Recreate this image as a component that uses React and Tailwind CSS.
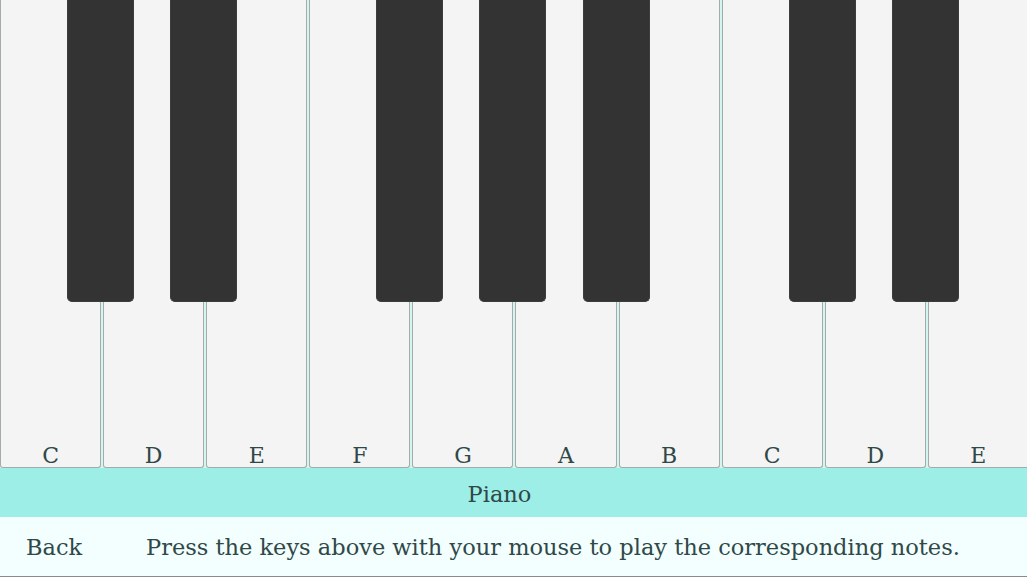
import React from 'react';

const keys = [
    { note: 'C', sharp: true },
    { note: 'D', sharp: true },
    { note: 'E', sharp: false },
    { note: 'F', sharp: true },
    { note: 'G', sharp: true },
    { note: 'A', sharp: true },
    { note: 'B', sharp: false },
    { note: 'C', sharp: true },
    { note: 'D', sharp: true },
    { note: 'E', sharp: false },
];

const App = () => {
    return (
        <div className="h-screen flex flex-col bg-[#effffd] text-[#2f4848] overflow-hidden" style={{ fontFamily: '"DejaVu Serif", serif' }}>
            {/* keyboard */}
            <div className="h-[468px] flex gap-[2px] w-[1029px] bg-[#d4f4f0]">
                {keys.map((k, i) => (
                    <div
                        key={i}
                        className="relative flex-1 bg-[#f4f4f4] border border-t-0 border-[#a3acab] rounded-b-[3px] flex items-end justify-center"
                    >
                        <span className="text-[22px] leading-none">{k.note}</span>
                        {k.sharp && (
                            <div className="absolute top-0 right-[-34px] w-[67px] h-[302px] bg-[#333333] border border-t-0 border-[#3c3c3c] rounded-b-[5px] z-10"></div>
                        )}
                    </div>
                ))}
            </div>

            {/* title bar */}
            <div className="h-[49px] bg-[#9deee6] flex items-center justify-center pt-[5px] pr-[28px] text-[22.5px]">
                Piano
            </div>

            {/* footer */}
            <div className="flex-1 bg-[#f2fffe] border-b border-[#8a8a8a] flex items-center pt-[3px] text-[22.5px]">
                <span className="ml-[26px] w-[120px]">Back</span>
                <span>Press the keys above with your mouse to play the corresponding notes.</span>
            </div>
        </div>
    );
};

export default App;
